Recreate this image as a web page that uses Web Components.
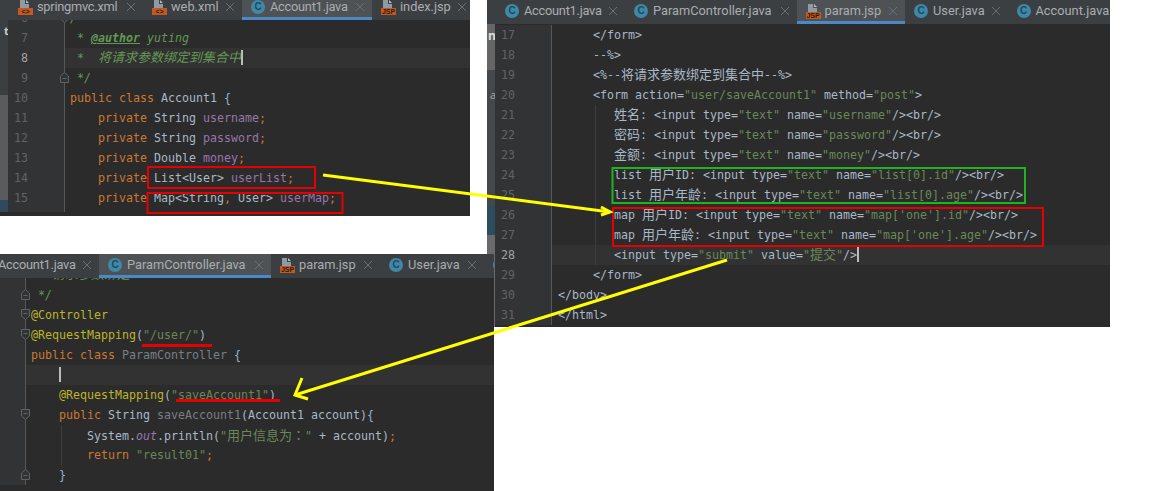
<!DOCTYPE html>
<html>
<head>
<meta charset="utf-8">
<title>IDE screenshots</title>
<style>
  html, body { margin: 0; background: #fff; }
</style>
</head>
<body>
<ide-desktop>
  <ide-window style="left:0;top:0;width:470px;height:216px;--shift:-4px;--scroll:-12px;--strip:linear-gradient(#3c3f41 0 75px,#5a5b5d 75px 180px,#2f4a5e 180px)">
    <span slot="tabs" style="flex:none;width:9px"></span>
    <editor-tab slot="tabs" icon="xml" label="springmvc.xml" w="82" tight></editor-tab>
    <editor-tab slot="tabs" icon="xml" label="web.xml" w="47"></editor-tab>
    <editor-tab slot="tabs" icon="java" label="Account1.java" w="78" active tight></editor-tab>
    <editor-tab slot="tabs" icon="jsp" label="index.jsp" w="50"></editor-tab>
    <span slot="strip" style="position:absolute;left:4px;top:3px;color:#ccc;font:bold 11px 'Open Sans',sans-serif">t</span>
    <code-line n="6" fold="down"><span class="d">/**</span></code-line>
    <code-line n="7"><span class="d"> * </span><span class="g">@author</span><span class="d"> yuting</span></code-line>
    <code-line n="8" current><span class="d"> *  </span><span class="d z">将请求参数绑定到集合中</span><i class="c"></i></code-line>
    <code-line n="9" fold="up"><span class="d"> */</span></code-line>
    <code-line n="10"><span class="k">public class </span>Account1 <span class="b">{</span></code-line>
    <code-line n="11"><span class="k">    private </span>String <span class="f">username</span><span class="k">;</span></code-line>
    <code-line n="12"><span class="k">    private </span>String <span class="f">password</span><span class="k">;</span></code-line>
    <code-line n="13"><span class="k">    private </span>Double <span class="f">money</span><span class="k">;</span></code-line>
    <code-line n="14"><span class="k">    private </span>List&lt;User&gt; <span class="f">userList</span><span class="k">;</span></code-line>
    <code-line n="15"><span class="k">    private </span>Map&lt;String<span class="k">, </span>User&gt; <span class="f">userMap</span><span class="k">;</span></code-line>
    <code-line n="16"></code-line>
  </ide-window>

  <ide-window style="left:487px;top:0;width:623px;height:327px;--scroll:1px;--code-pad:6px;--strip:linear-gradient(#666 0 46px,#45484a 46px 181px,#2e4c60 181px 211px,#6a6a6a 211px)">
    <span slot="tabs" style="flex:none;width:9px"></span>
    <editor-tab slot="tabs" icon="java" label="Account1.java" w="77" tight></editor-tab>
    <editor-tab slot="tabs" icon="java" label="ParamController.java" w="119.5"></editor-tab>
    <editor-tab slot="tabs" icon="jsp" label="param.jsp" w="56.5" active></editor-tab>
    <editor-tab slot="tabs" icon="java" label="User.java" w="50.5"></editor-tab>
    <editor-tab slot="tabs" icon="java" label="Account.java" w="71"></editor-tab>
    <span slot="strip" style="position:absolute;left:1px;top:3px;color:#ddd;font:bold 12px 'Open Sans',sans-serif">n</span>
    <span slot="strip" style="position:absolute;left:3px;top:63px;color:#aaa;font:11px 'Open Sans',sans-serif">a</span>
    <code-line n="17">     &lt;/form&gt;</code-line>
    <code-line n="18">     --%&gt;</code-line>
    <code-line n="19">     &lt;%--<span class="z">将请求参数绑定到集合中</span>--%&gt;</code-line>
    <code-line n="20">     &lt;form action=<span class="s">"user/saveAccount1"</span> method=<span class="s">"post"</span>&gt;</code-line>
    <code-line n="21" guide="43">        <span class="z">姓名</span>: &lt;input type=<span class="s">"text"</span> name=<span class="s">"username"</span>/&gt;&lt;br/&gt;</code-line>
    <code-line n="22" guide="43">        <span class="z">密码</span>: &lt;input type=<span class="s">"text"</span> name=<span class="s">"password"</span>/&gt;&lt;br/&gt;</code-line>
    <code-line n="23" guide="43">        <span class="z">金额</span>: &lt;input type=<span class="s">"text"</span> name=<span class="s">"money"</span>/&gt;&lt;br/&gt;</code-line>
    <code-line n="24" guide="43">        list <span class="z">用户</span>ID: &lt;input type=<span class="s">"text"</span> name=<span class="s">"list[0].id"</span>/&gt;&lt;br/&gt;</code-line>
    <code-line n="25" guide="43">        list <span class="z">用户年龄</span>: &lt;input type=<span class="s">"text"</span> name=<span class="s">"list[0].age"</span>/&gt;&lt;br/&gt;</code-line>
    <code-line n="26" guide="43">        map <span class="z">用户</span>ID: &lt;input type=<span class="s">"text"</span> name=<span class="s">"map['one'].id"</span>/&gt;&lt;br/&gt;</code-line>
    <code-line n="27" guide="43">        map <span class="z">用户年龄</span>: &lt;input type=<span class="s">"text"</span> name=<span class="s">"map['one'].age"</span>/&gt;&lt;br/&gt;</code-line>
    <code-line n="28" guide="43" current>        &lt;input type=<span class="s">"submit"</span> value=<span class="s">"</span><span class="s z">提交</span><span class="s">"</span>/&gt;<i class="c"></i></code-line>
    <code-line n="29">     &lt;/form&gt;</code-line>
    <code-line n="30">&lt;/body&gt;</code-line>
    <code-line n="31">&lt;/html&gt;</code-line>
  </ide-window>

  <ide-window style="left:0;top:254px;width:494px;height:237px;--scroll:-13px;--gutter:25px;--strip-w:0px">
    <span slot="tabs" style="flex:none;width:0;margin-left:-30px"></span>
    <editor-tab slot="tabs" icon="java" label="Account1.java" w="77" tight></editor-tab>
    <editor-tab slot="tabs" icon="java" label="ParamController.java" w="120" active></editor-tab>
    <editor-tab slot="tabs" icon="jsp" label="param.jsp" w="57"></editor-tab>
    <editor-tab slot="tabs" icon="java" label="User.java" w="52"></editor-tab>
    <editor-tab slot="tabs" icon="java" label="" w="0"></editor-tab>
    <code-line fold="line"><span class="d">   </span><span class="d z">请求参数绑定</span></code-line>
    <code-line fold="up"><span class="d"> */</span></code-line>
    <code-line fold="down"><span class="a">@Controller</span></code-line>
    <code-line fold="down"><span class="a">@RequestMapping</span>(<span class="s">"/user/"</span>)</code-line>
    <code-line><span class="k">public class </span><span class="u">ParamController </span><span class="b">{</span></code-line>
    <code-line current>    <i class="c"></i></code-line>
    <code-line>    <span class="a">@RequestMapping</span>(<span class="s">"saveAccount1"</span>)</code-line>
    <code-line fold="down"><span class="k">    public </span>String <span class="u">saveAccount1</span>(Account1 account)<span class="b">{</span></code-line>
    <code-line guide="35">        System.<span class="o">out</span>.println(<span class="s">"</span><span class="s z">用户信息为</span><span class="s z tc">：</span><span class="s">"</span> + account)<span class="k">;</span></code-line>
    <code-line guide="35"><span class="k">        return </span><span class="s">"result01"</span><span class="k">;</span></code-line>
    <code-line fold="up">    <span class="b">}</span></code-line>
  </ide-window>

  <markup-layer></markup-layer>
</ide-desktop>

<script>
class IdeDesktop extends HTMLElement {
  constructor() {
    super();
    this.attachShadow({ mode: "open" });
    this.shadowRoot.innerHTML = `
      <style>
        :host { display: block; position: relative; width: 1149px; height: 491px; overflow: hidden; background: #fff; }
      </style>
      <slot></slot>
    `;
  }
}

class IdeWindow extends HTMLElement {
  constructor() {
    super();
    this.attachShadow({ mode: "open" });
    this.shadowRoot.innerHTML = `
      <style>
        :host { display: block; position: absolute; overflow: hidden; background: #2b2b2b; }
        .wrap { display: flex; flex-direction: column; height: 100%; margin-top: var(--shift, 0); }
        .tabs { flex: none; display: flex; height: 24px; background: #3c3f41; overflow: hidden; }
        .body { flex: 1; display: flex; min-height: 0; }
        .strip { flex: none; position: relative; width: var(--strip-w, 8px); background: var(--strip, #3c3f41); }
        .lines { flex: 1; min-width: 0; overflow: hidden; }
        .inner { display: flex; flex-direction: column; margin-top: var(--scroll, 0); }
      </style>
      <div class="wrap">
        <div class="tabs"><slot name="tabs"></slot></div>
        <div class="body">
          <div class="strip"><slot name="strip"></slot></div>
          <div class="lines"><div class="inner"><slot></slot></div></div>
        </div>
      </div>
    `;
  }
}

class FileIcon extends HTMLElement {
  constructor() {
    super();
    this.attachShadow({ mode: "open" });
  }

  connectedCallback() {
    const type = this.getAttribute("type");
    const sheet = `
      <style>
        :host { display: block; flex: none; position: relative; width: 15px; height: 15px; }
        .round { position: absolute; left: 0; top: 0; width: 14px; height: 14px; border-radius: 50%; background: #3f88a8; color: #1f4a5e;
          font: bold 10px/14px "Liberation Sans", sans-serif; text-align: center; }
        svg { position: absolute; left: 0; top: 0; }
        .badge { position: absolute; left: 0; right: 0; top: 8px; height: 7px; background: #c4581f; color: #26211c;
          font: bold 7px/7px "Liberation Sans", sans-serif; text-align: center; }
      </style>
    `;
    if (type === "java") {
      this.shadowRoot.innerHTML = sheet + `<div class="round">C</div>`;
      return;
    }
    const mark = type === "jsp" ? "JSP" : "&lt;&gt;";
    this.shadowRoot.innerHTML = sheet + `
      <svg width="15" height="15" viewBox="0 0 15 15">
        <path d="M2 0H7V4H11V8H2Z" fill="#8f9aa3"/>
        <path d="M8 0L11 3H8Z" fill="#b5bcc2"/>
      </svg>
      <div class="badge">${mark}</div>
    `;
  }
}

class EditorTab extends HTMLElement {
  constructor() {
    super();
    this.attachShadow({ mode: "open" });
  }

  connectedCallback() {
    this.shadowRoot.innerHTML = `
      <style>
        :host { flex: none; display: flex; align-items: flex-start; box-sizing: border-box; height: 24px; padding: 4px 8px 0 9px; gap: 4px; color: #a9adb0; }
        :host([active]) { background: #4e5254; border-bottom: 3px solid #4a88c7; }
        :host([tight]) .label { letter-spacing: -0.25px; }
        .label { flex: none; width: ${this.getAttribute("w")}px; font: 12.8px/14px Roboto, "Liberation Sans", sans-serif; white-space: pre; }
        .close { flex: none; margin-left: 4px; margin-top: 3px; }
      </style>
      <file-icon type="${this.getAttribute("icon")}"></file-icon>
      <span class="label">${this.getAttribute("label")}</span>
      <svg class="close" width="8" height="8" viewBox="0 0 8 8" stroke="#6b6e70" stroke-width="1"><path d="M0 0L8 8M8 0L0 8"/></svg>
    `;
  }
}

class CodeLine extends HTMLElement {
  constructor() {
    super();
    this.attachShadow({ mode: "open" });
  }

  connectedCallback() {
    const fold = this.getAttribute("fold");
    const guide = this.getAttribute("guide");
    let marker = "";
    if (fold === "up") {
      marker = `<path d="M0.5 4L4.5 0.5L8.5 4V10.5H0.5Z" fill="#313335"/><path d="M2.5 6.5H6.5"/>`;
    } else if (fold === "down") {
      marker = `<path d="M0.5 0.5H8.5V7L4.5 10.5L0.5 7Z" fill="#313335"/><path d="M2.5 4.5H6.5"/>`;
    }
    this.shadowRoot.innerHTML = `
      <style>
        :host { display: block; flex: none; height: 20px; }
        .row { display: flex; height: 20px; font: 11.63px/20px "DejaVu Sans Mono", "Noto Sans CJK SC", monospace; color: #a9b7c6; white-space: pre; }
        .gutter { flex: none; position: relative; box-sizing: border-box; width: var(--gutter, 56px); background: #313335; color: #606366; text-align: right; padding-right: 36px; }
        :host(:not([n])) .gutter { padding-right: 0; }
        .rule { flex: none; width: 1px; background: #555759; }
        .fold { position: absolute; right: -5px; top: 4px; fill: none; stroke: #606366; }
        .code { flex: 1; position: relative; padding-left: var(--code-pad, 5px); }
        :host([current]) .code { background: #323232; }
        :host([current]) .gutter { color: #a4a3a3; }
        .guide { position: absolute; top: 0; bottom: 0; width: 1px; background: #3d3d3d; }
        ::slotted(.k) { color: #cc7832; }
        ::slotted(.s) { color: #6a8759; }
        ::slotted(.f) { color: #9876aa; }
        ::slotted(.a) { color: #bbb529; }
        ::slotted(.d) { color: #629755; font-style: italic; }
        ::slotted(.g) { color: #629755; font-style: italic; font-weight: bold; text-decoration: underline; }
        ::slotted(.u) { color: #7a7e85; }
        ::slotted(.o) { color: #9876aa; font-style: italic; }
        ::slotted(.b) { color: #8fb3d4; }
        ::slotted(.z) { font-size: 13px; }
        ::slotted(.tc) { font-family: "Noto Sans CJK TC", sans-serif; }
        ::slotted(.c) { display: inline-block; width: 2px; height: 15px; margin-right: -2px; background: #bbb; vertical-align: -3px; }
      </style>
      <div class="row">
        <div class="gutter">${this.getAttribute("n") || ""}${marker ? `<svg class="fold" width="9" height="11" viewBox="0 0 9 11">${marker}</svg>` : ""}</div>
        <div class="rule"></div>
        <div class="code">${guide ? `<div class="guide" style="left:${guide}px"></div>` : ""}<slot></slot></div>
      </div>
    `;
  }
}

class MarkupLayer extends HTMLElement {
  constructor() {
    super();
    this.attachShadow({ mode: "open" });
    this.shadowRoot.innerHTML = `
      <style>
        :host { display: block; position: absolute; inset: 0; pointer-events: none; }
        svg { display: block; }
      </style>
      <svg width="1149" height="491" viewBox="0 0 1149 491" fill="none">
        <g stroke="#e60000" stroke-width="2">
          <rect x="148" y="167" width="167" height="21"/>
          <rect x="147.5" y="193" width="195" height="20"/>
          <rect x="613" y="208" width="430" height="38"/>
        </g>
        <rect x="612.5" y="168" width="412.5" height="35" stroke="#1fb31f" stroke-width="2"/>
        <g stroke="#e60000" stroke-width="3">
          <path d="M142 345.5H212"/>
          <path d="M176 400.5H280"/>
        </g>
        <g stroke="#ffff00" stroke-width="3">
          <path d="M323 175L610 212"/>
          <path d="M601 207L610 212L601 215"/>
          <path d="M727 260L295 395"/>
          <path d="M302 378L295 395L308 399"/>
        </g>
      </svg>
    `;
  }
}

customElements.define("file-icon", FileIcon);
customElements.define("editor-tab", EditorTab);
customElements.define("code-line", CodeLine);
customElements.define("ide-window", IdeWindow);
customElements.define("markup-layer", MarkupLayer);
customElements.define("ide-desktop", IdeDesktop);
</script>
</body>
</html>
